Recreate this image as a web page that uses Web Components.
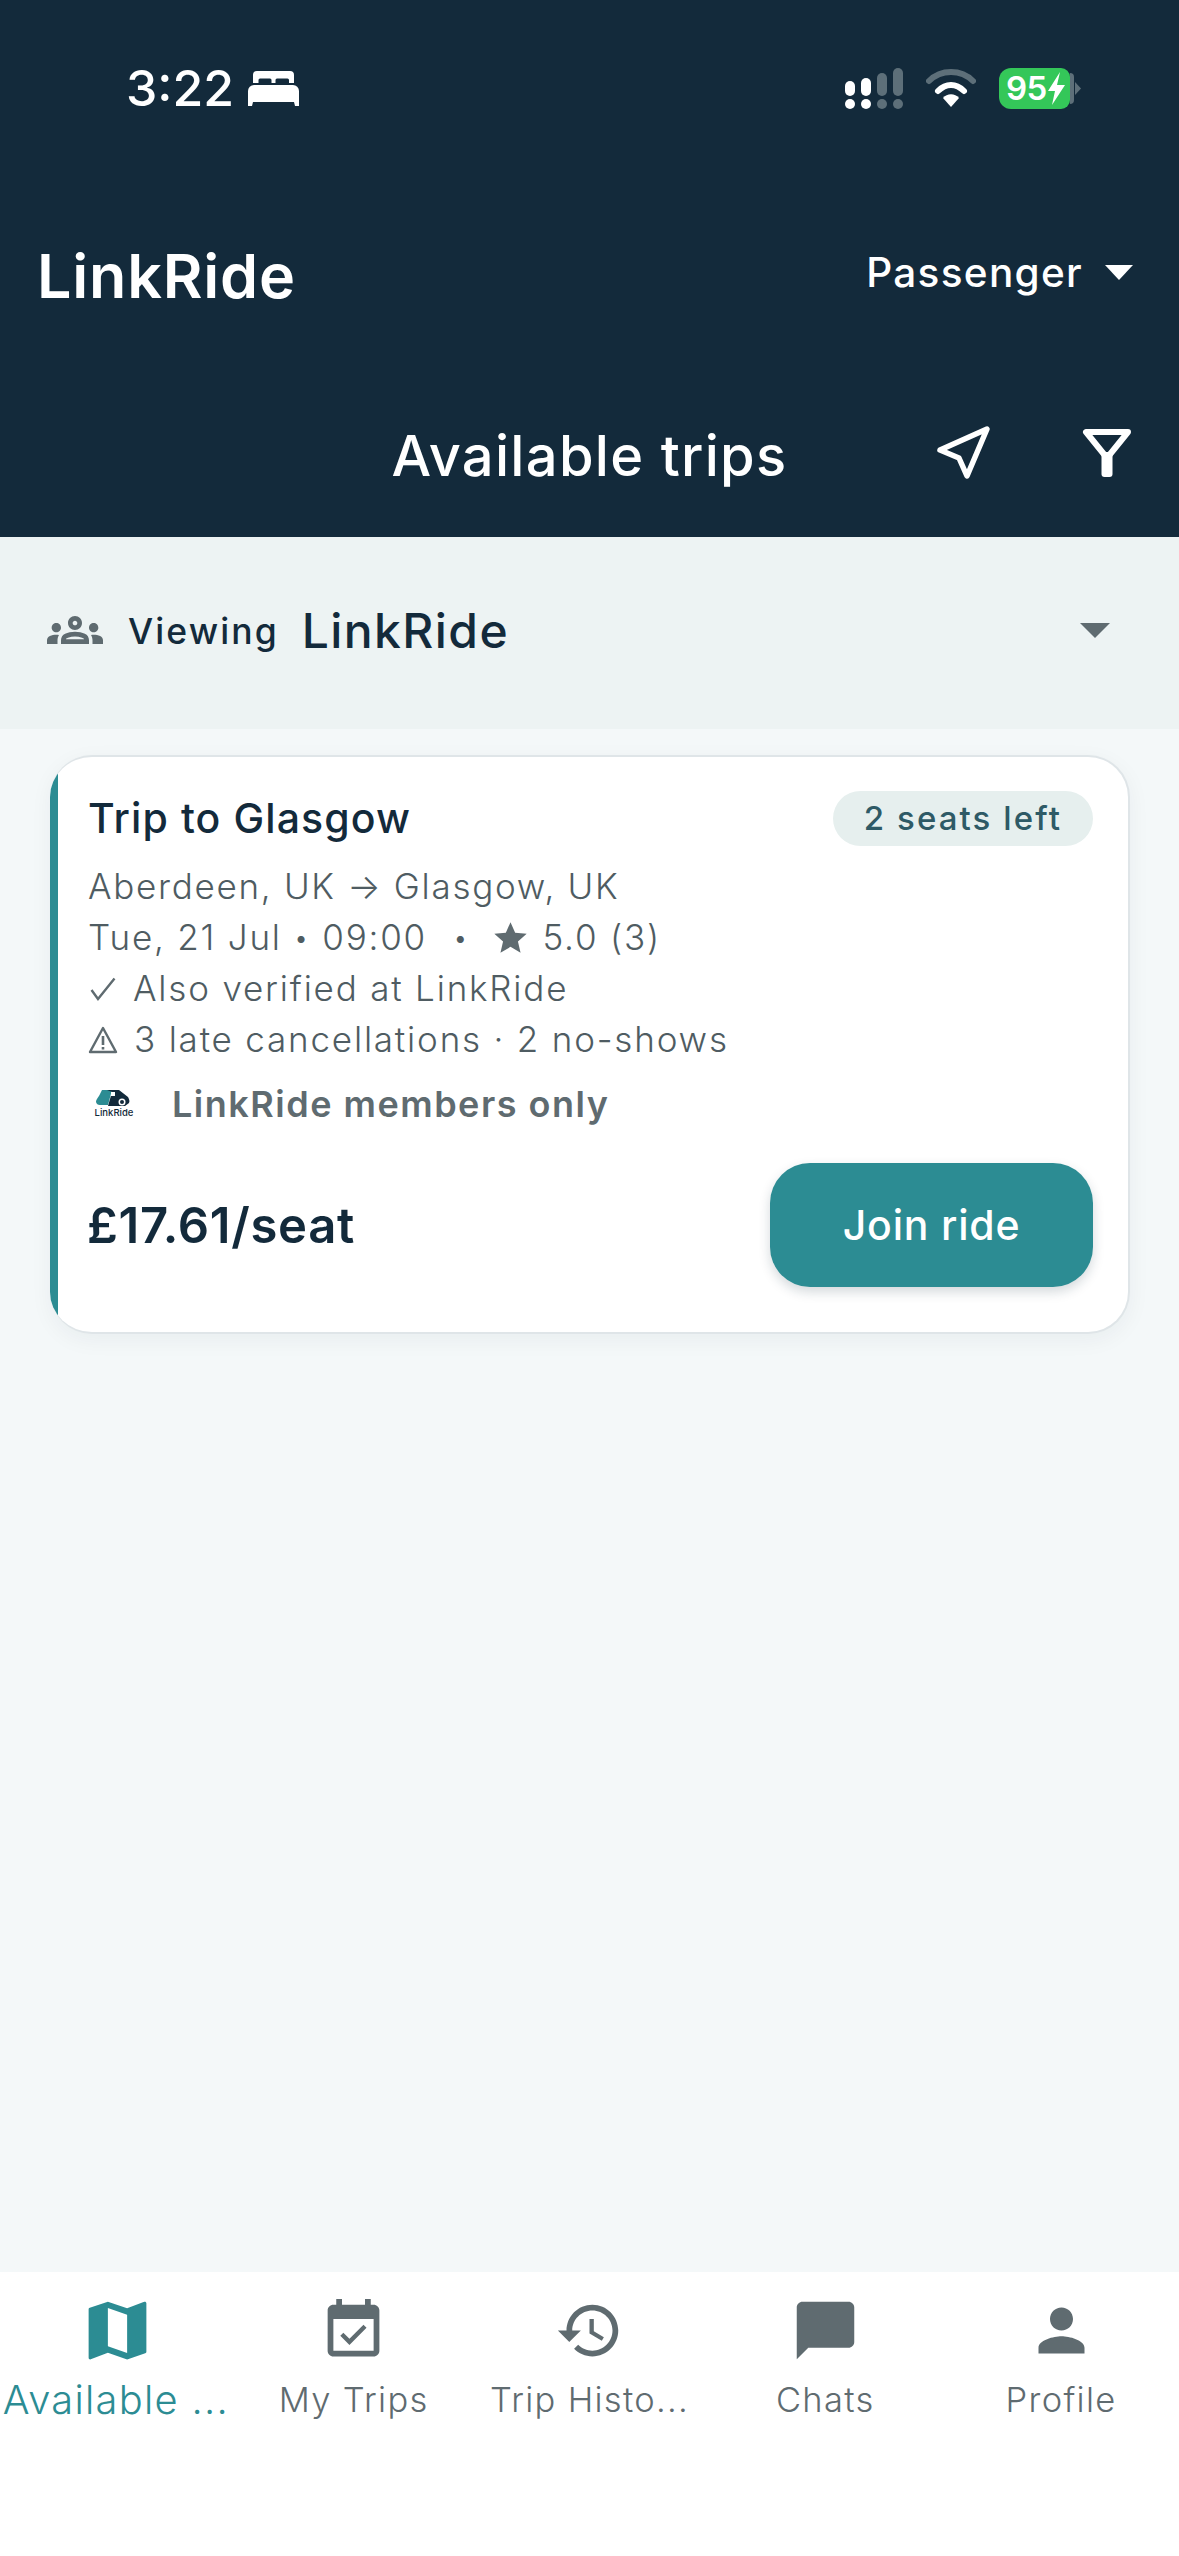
<!DOCTYPE html>
<html lang="en">
<head>
<meta charset="utf-8">
<title>LinkRide</title>
<style>
  html, body { margin: 0; height: 100%; }
  body { font-family: Inter, "Liberation Sans", sans-serif; background: #f4f8f9; color: #132a3b; }
  #app { display: flex; flex-direction: column; height: 2556px; }
  #content { flex: 1; min-height: 0; }
  .route { letter-spacing: 1.700px; }
</style>
</head>
<body>
<div id="app">
  <app-header></app-header>
  <viewing-bar label="Viewing" name="LinkRide"></viewing-bar>
  <div id="content">
    <trip-card title="Trip to Glasgow" seats="2 seats left" price="£17.61/seat">
      <div class="route">Aberdeen, UK → Glasgow, UK</div>
      <trip-rating day="Tue, 21 Jul" time="09:00" score="5.0 (3)"></trip-rating>
      <verified-line text="Also verified at LinkRide"></verified-line>
      <late-line text="3 late cancellations · 2 no-shows"></late-line>
    </trip-card>
  </div>
  <bottom-nav>
    <nav-item label="Available ..." active icon="M20.5 3l-.16.03L15 5.1 9 3 3.36 4.9c-.21.07-.36.25-.36.48V20.5c0 .28.22.5.5.5l.16-.03L9 18.9l6 2.1 5.64-1.9c.21-.07.36-.25.36-.48V3.5c0-.28-.22-.5-.5-.5zM15 19l-6-2.11V5l6 2.11V19z"></nav-item>
    <nav-item label="My Trips" icon="M16.53 11.06L15.47 10l-4.88 4.88-2.12-2.12-1.06 1.06L10.59 17l5.94-5.94zM19 3h-1V1h-2v2H8V1H6v2H5c-1.11 0-1.99.9-1.99 2L3 19c0 1.1.89 2 2 2h14c1.1 0 2-.9 2-2V5c0-1.1-.9-2-2-2zm0 16H5V8h14v11z"></nav-item>
    <nav-item label="Trip Histo..." icon="M13 3c-4.97 0-9 4.03-9 9H1l3.89 3.89.07.14L9 12H6c0-3.87 3.13-7 7-7s7 3.13 7 7-3.13 7-7 7c-1.93 0-3.68-.79-4.94-2.06l-1.42 1.42C8.27 19.99 10.51 21 13 21c4.97 0 9-4.03 9-9s-4.03-9-9-9zm-1 5v5l4.28 2.54.72-1.21-3.5-2.08V8H12z"></nav-item>
    <nav-item label="Chats" icon="M20 2H4c-1.1 0-2 .9-2 2v18l4-4h14c1.1 0 2-.9 2-2V4c0-1.1-.9-2-2-2z"></nav-item>
    <nav-item label="Profile" icon="M12 12c2.21 0 4-1.79 4-4s-1.79-4-4-4-4 1.79-4 4 1.79 4 4 4zm0 2c-2.67 0-8 1.34-8 4v2h16v-2c0-2.66-5.33-4-8-4z"></nav-item>
  </bottom-nav>
</div>

<script>
class StatusBar extends HTMLElement {
  constructor() {
    super();
    this.attachShadow({ mode: 'open' }).innerHTML = `
      <style>
        :host { display: flex; align-items: center; justify-content: space-between; height: 176px; padding: 0 109px 0 126px; color: #fff; }
        .left, .right { display: flex; align-items: center; }
        .left { gap: 14px; }
        .time { font-size: 50px; font-weight: 500; }
        .right { gap: 23px; }
        .battery { position: relative; display: flex; align-items: center; width: 71px; height: 41px; padding-left: 7px; box-sizing: border-box; border-radius: 12px 9px 9px 12px; background: #34c759; font-size: 33px; font-weight: 600; letter-spacing: -.5px; }
        .battery svg { margin-left: 1px; }
        .tail { position: absolute; right: -4px; top: 5px; bottom: 5px; width: 4px; background: #5d6f79; border-radius: 0 4px 4px 0; }
        .nub { position: absolute; right: -11px; top: 14px; }
      </style>
      <div class="left">
        <span class="time">3:22</span>
        <svg width="51" height="35" viewBox="0 0 51 35"><path fill="#fff" d="M5 12V4a4 4 0 0 1 4-4h33a4 4 0 0 1 4 4v8h-5V9a1.500 1.500 0 0 0-1.500-1.500H29a1.500 1.500 0 0 0-1.500 1.500v3h-4V9A1.500 1.500 0 0 0 22 7.500H12A1.500 1.500 0 0 0 10.500 9v3zM0 20a6 6 0 0 1 6-6h39a6 6 0 0 1 6 6v15h-4l-1-4H5l-1 4H0z"/></svg>
      </div>
      <div class="right">
        <svg width="58" height="41" viewBox="0 0 58 41">
          <g fill="#fff">
            <rect x="0" y="13" width="10" height="15" rx="5"/><rect x="16" y="10" width="10" height="18" rx="5"/>
            <circle cx="5" cy="36" r="5"/><circle cx="21" cy="36" r="5"/>
          </g>
          <g fill="#5d6f79">
            <rect x="32" y="5" width="10" height="23" rx="5"/><rect x="48" y="0" width="10" height="28" rx="5"/>
            <circle cx="37" cy="36" r="5"/><circle cx="53" cy="36" r="5"/>
          </g>
        </svg>
        <svg width="50" height="38" viewBox="0 0 50 38">
          <path d="M3 12C15 0 35 0 47 12" fill="none" stroke="#5d6f79" stroke-width="6" stroke-linecap="round"/>
          <path d="M12 22C20 14 30 14 38 22" fill="none" stroke="#fff" stroke-width="6" stroke-linecap="round"/>
          <path d="M17 29C21 24 29 24 33 29L25 38z" fill="#fff"/>
        </svg>
        <div class="battery">95
          <svg width="17" height="33" viewBox="0 0 17 33"><path fill="#fff" d="M12 0L0 19h7L4 33 17 13h-8z"/></svg>
          <span class="tail"></span>
          <svg class="nub" width="6" height="13" viewBox="0 0 6 13"><path fill="#5d6f79" d="M0 0l6 6.500L0 13z"/></svg>
        </div>
      </div>`;
  }
}

class AppHeader extends HTMLElement {
  constructor() {
    super();
    this.attachShadow({ mode: 'open' }).innerHTML = `
      <style>
        :host { display: block; height: 537px; background: #132a3b; color: #fff; }
        .brand { display: flex; align-items: center; justify-content: space-between; height: 200px; padding: 0 46px 0 37px; }
        .brand b { font-size: 61px; font-weight: 600; letter-spacing: .8px; }
        .role { display: flex; align-items: center; gap: 22px; font-size: 40.500px; font-weight: 500; letter-spacing: 1.300px; margin-bottom: 8px; }
        .caret { width: 0; height: 0; border: 14px solid transparent; border-top: 15px solid #fff; border-bottom: 0; }
        .title { display: grid; grid-template-columns: 1fr auto 1fr; align-items: center; font-size: 56px; font-weight: 500; letter-spacing: 1.300px; padding-top: 46px; }
        .title span { grid-column: 2; }
        .actions { grid-column: 3; justify-self: end; display: flex; align-items: center; gap: 90px; margin: 0 47px 6px 0; }
      </style>
      <status-bar></status-bar>
      <div class="brand"><b>LinkRide</b><span class="role">Passenger<i class="caret"></i></span></div>
      <div class="title">
        <span>Available trips</span>
        <div class="actions">
          <svg width="58" height="58" viewBox="0 0 58 58"><path d="M6 26L53 5 33 52 25 34z" fill="none" stroke="#fff" stroke-width="5.500" stroke-linejoin="round"/></svg>
          <svg width="50" height="50" viewBox="0 0 50 50"><path d="M4 4H46L25 30z" fill="none" stroke="#fff" stroke-width="6" stroke-linejoin="round"/><rect x="19.500" y="24" width="11" height="25" rx="3" fill="#fff"/></svg>
        </div>
      </div>`;
  }
}

class ViewingBar extends HTMLElement {
  constructor() {
    super();
    this.attachShadow({ mode: 'open' }).innerHTML = `
      <style>
        :host { display: flex; align-items: center; height: 192px; padding: 0 69px 6px 47px; box-sizing: border-box; background: #edf3f3; }
        svg { fill: #5f6b70; }
        .label { margin: 3px 0 0 25px; font-size: 35.500px; font-weight: 500; letter-spacing: 2.100px; color: #132a3b; }
        .name { margin-left: 23px; font-size: 48px; font-weight: 500; letter-spacing: 1.400px; color: #132a3b; }
        .caret { margin-left: auto; width: 0; height: 0; border: 15px solid transparent; border-top: 15px solid #5f6b70; border-bottom: 0; }
      </style>
      <svg width="56" height="56" viewBox="0 0 24 24"><path d="M4 13c1.100 0 2-.9 2-2s-.9-2-2-2-2 .9-2 2 .9 2 2 2zm1.130 1.100c-.37-.06-.74-.1-1.130-.1-.99 0-1.930.21-2.780.58C.48 14.900 0 15.620 0 16.430V18h4.500v-1.610c0-.83.23-1.610.63-2.290zM20 13c1.100 0 2-.9 2-2s-.9-2-2-2-2 .9-2 2 .9 2 2 2zm4 3.430c0-.81-.48-1.530-1.220-1.850-.85-.37-1.790-.58-2.780-.58-.39 0-.76.04-1.130.1.4.68.63 1.460.63 2.290V18H24v-1.570zm-7.760-2.780c-1.170-.52-2.610-.9-4.240-.9-1.630 0-3.070.39-4.240.9C6.680 14.130 6 15.210 6 16.390V18h12v-1.610c0-1.180-.68-2.260-1.760-2.740zM8.070 16c.09-.23.13-.39.91-.69.97-.38 1.990-.56 3.020-.56s2.050.18 3.020.56c.77.3.81.46.91.69H8.070zM12 8c.55 0 1 .45 1 1s-.45 1-1 1-1-.45-1-1 .45-1 1-1m0-2c-1.660 0-3 1.340-3 3s1.340 3 3 3 3-1.340 3-3-1.340-3-3-3z"/></svg>
      <span class="label">${this.getAttribute('label')}</span>
      <span class="name">${this.getAttribute('name')}</span>
      <i class="caret"></i>`;
  }
}

class TripRating extends HTMLElement {
  constructor() {
    super();
    this.attachShadow({ mode: 'open' }).innerHTML = `
      <style>
        :host { display: flex; align-items: center; }
        .dot { font-size: 26px; margin: 0 12px; }
        .sep { margin: 0 24px 0 26px; }
        svg { margin-right: 14px; fill: #5f6b70; }
      </style>
      <span>${this.getAttribute('day')}</span><span class="dot">•</span><span>${this.getAttribute('time')}</span><span class="dot sep">•</span>
      <svg width="35" height="35" viewBox="0 0 24 24"><path d="M12 1.500l3.200 7.300 7.900.7-6 5.200 1.800 7.800L12 18.400l-6.900 4.100 1.800-7.800-6-5.200 7.900-.7z"/></svg>
      <span>${this.getAttribute('score')}</span>`;
  }
}

class VerifiedLine extends HTMLElement {
  constructor() {
    super();
    this.attachShadow({ mode: 'open' }).innerHTML = `
      <style>
        :host { display: flex; align-items: center; gap: 17px; padding-left: 2px; }
        svg { flex: none; }
      </style>
      <svg width="26" height="24" viewBox="0 0 26 24"><path d="M1.500 13L8 22 24.500 1.500" fill="none" stroke="#5f6b70" stroke-width="2.400"/></svg>
      <span>${this.getAttribute('text')}</span>`;
  }
}

class LateLine extends HTMLElement {
  constructor() {
    super();
    this.attachShadow({ mode: 'open' }).innerHTML = `
      <style>
        :host { display: flex; align-items: center; gap: 16px; }
        svg { flex: none; }
      </style>
      <svg width="30" height="28" viewBox="0 0 30 28"><path d="M15 2L28 26H2z" fill="none" stroke="#5f6b70" stroke-width="2.400" stroke-linejoin="round"/><path d="M15 10v9M15 21v2.500" stroke="#5f6b70" stroke-width="2.600" fill="none"/></svg>
      <span>${this.getAttribute('text')}</span>`;
  }
}

const tripTemplate = document.createElement('template');
tripTemplate.innerHTML = `
  <style>
    :host { display: flex; margin: 26px 49px 0 50px; box-sizing: border-box; height: 579px; background: #fff; border: 2px solid #dfe5e8; border-left: 0; border-radius: 42px; overflow: hidden; box-shadow: 0 6px 22px rgba(19, 42, 59, .05); }
    .strip { flex: none; width: 8px; background: #2c8c93; }
    .body { flex: 1; min-width: 0; padding: 31px 35px 0 30px; }
    .top { display: flex; align-items: center; justify-content: space-between; height: 60px; }
    h2 { margin: 0; font-size: 41px; font-weight: 550; letter-spacing: 1.100px; }
    .seats { display: flex; align-items: center; height: 55px; padding: 0 31px; border-radius: 28px; background: #e6efee; color: #2e5a66; font-size: 33px; font-weight: 500; letter-spacing: 2.100px; }
    .lines { margin-top: 13px; font-size: 35px; font-weight: 300; line-height: 51px; letter-spacing: 1.800px; color: #4f5c62; }
    .members { display: flex; align-items: center; gap: 32px; margin-top: 9px; height: 60px; font-size: 36px; font-weight: 600; letter-spacing: 1.500px; color: #5f6b70; }
    .logo { width: 52px; height: 52px; flex: none; }
    .logo text { font: 500 9.500px Inter, "Liberation Sans", sans-serif; letter-spacing: 0; fill: #132a3b; }
    .bottom { display: flex; align-items: center; justify-content: space-between; margin-top: 29px; }
    .price { font-size: 49px; font-weight: 600; letter-spacing: .7px; margin-left: -1px; }
    button { width: 323px; height: 124px; border: 0; border-radius: 40px; background: #2c8c93; color: #fff; font: 500 41px Inter, "Liberation Sans", sans-serif; letter-spacing: .8px; box-shadow: 0 5px 12px rgba(19, 42, 59, .18); }
  </style>
  <div class="strip"></div>
  <div class="body">
    <div class="top"><h2></h2><span class="seats"></span></div>
    <div class="lines"><slot></slot></div>
    <div class="members">
      <svg class="logo" viewBox="0 0 52 52">
        <path d="M8 24c0-3 3-5 4-8l2-4h10l-4 15H12a4 4 0 0 1-4-3z" fill="#2c8c93"/>
        <path d="M19 12h12l9 7c1 2 2 4 1 6l-4 3H20l4-14z" fill="#132a3b"/>
        <circle cx="34" cy="24" r="3.500" fill="#fff"/><circle cx="34" cy="24" r="2" fill="#132a3b"/>
        <rect x="23" y="14" width="4" height="4" fill="#fff"/>
        <text x="26" y="38" text-anchor="middle">LinkRide</text>
      </svg>
      <span>LinkRide members only</span>
    </div>
    <div class="bottom"><span class="price"></span><button>Join ride</button></div>
  </div>`;

class TripCard extends HTMLElement {
  constructor() {
    super();
    this.attachShadow({ mode: 'open' }).appendChild(tripTemplate.content.cloneNode(true));
    this.shadowRoot.querySelector('h2').textContent = this.getAttribute('title');
    this.shadowRoot.querySelector('.seats').textContent = this.getAttribute('seats');
    this.shadowRoot.querySelector('.price').textContent = this.getAttribute('price');
  }
}

class NavItem extends HTMLElement {
  constructor() {
    super();
    const active = this.hasAttribute('active');
    this.attachShadow({ mode: 'open' }).innerHTML = `
      <style>
        :host { display: flex; flex-direction: column; align-items: center; min-width: 0; color: ${active ? '#2c8c93' : '#5f6b70'}; }
        .icon { display: flex; align-items: center; justify-content: center; height: 77px; }
        svg { fill: currentColor; display: block; }
        span { margin: 8px ${active ? 4 : 0}px 0 0; font-size: ${active ? 39.8 : 34.5}px; line-height: 46px; letter-spacing: 1.300px; white-space: nowrap; font-weight: 300; }
      </style>
      <div class="icon"><svg width="${active ? 77 : 69}" height="${active ? 77 : 69}" viewBox="0 0 24 24"><path d="${this.getAttribute('icon')}"/></svg></div>
      <span>${this.getAttribute('label')}</span>`;
  }
}

class BottomNav extends HTMLElement {
  constructor() {
    super();
    this.attachShadow({ mode: 'open' }).innerHTML = `
      <style>
        :host { display: grid; grid-template-columns: repeat(5, 1fr); height: 284px; box-sizing: border-box; padding-top: 20px; background: #fff; }
      </style>
      <slot></slot>`;
  }
}

customElements.define('status-bar', StatusBar);
customElements.define('app-header', AppHeader);
customElements.define('viewing-bar', ViewingBar);
customElements.define('trip-rating', TripRating);
customElements.define('verified-line', VerifiedLine);
customElements.define('late-line', LateLine);
customElements.define('trip-card', TripCard);
customElements.define('nav-item', NavItem);
customElements.define('bottom-nav', BottomNav);
</script>
</body>
</html>
